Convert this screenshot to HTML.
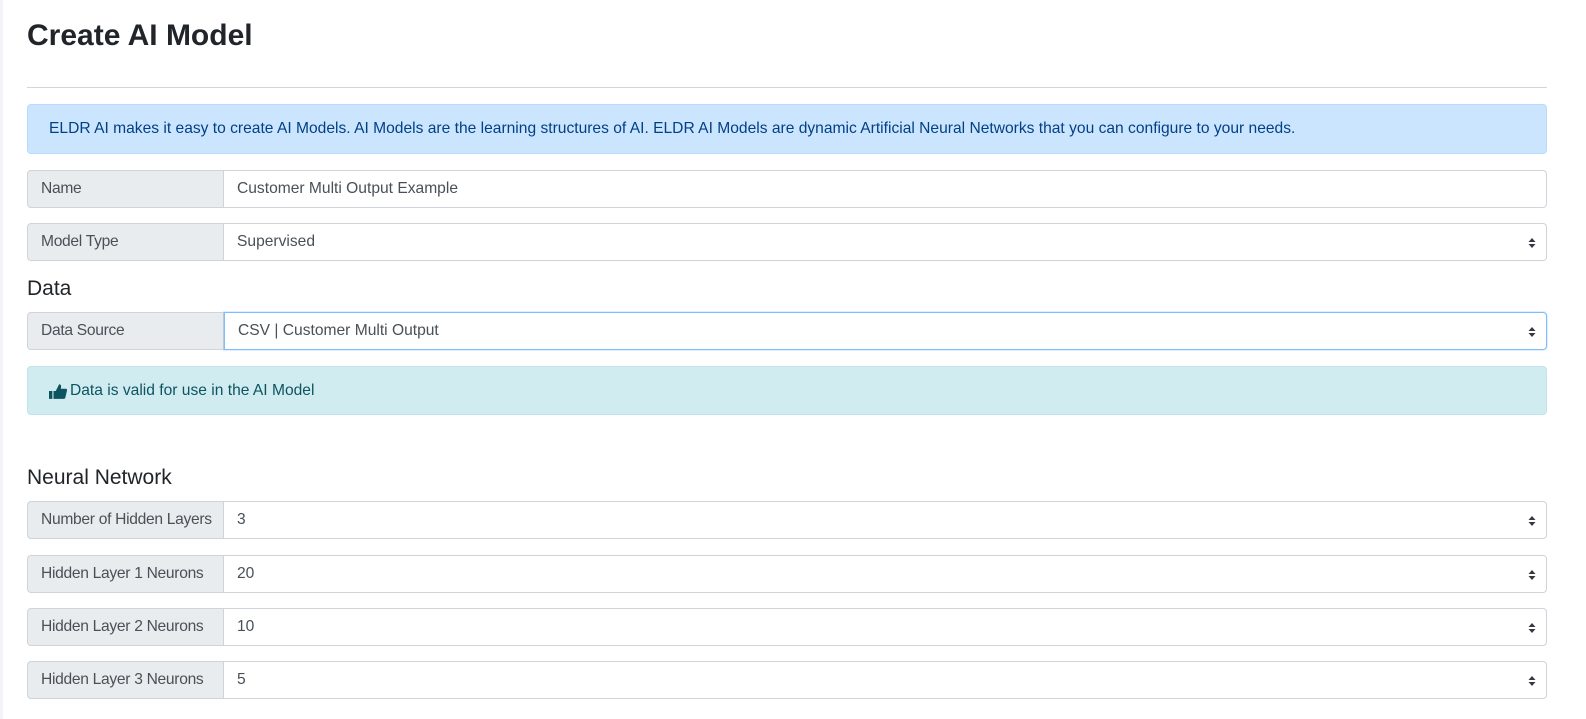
<!DOCTYPE html>
<html><head><meta charset="utf-8"><style>
*{box-sizing:border-box;margin:0;padding:0}
body{width:1586px;height:719px;background:#fff;font-family:"Liberation Sans",sans-serif;color:#212529;position:relative;overflow:hidden}
.strip{position:absolute;left:0;top:0;width:3px;height:719px;background:#f3f4f8}
h1{position:absolute;left:27px;top:19px;font-size:30px;font-weight:bold;color:#212529;letter-spacing:0px}
hr{position:absolute;left:27px;top:87px;width:1520px;border:0;border-top:1px solid #d5d5d5}
.alert{position:absolute;left:27px;width:1520px;border-radius:4px;font-size:15.6px;padding-left:21px;display:flex;align-items:center}
.info{top:104px;height:50px;background:#cce5ff;border:1px solid #b8daff;color:#004085}
.ok{top:366px;height:49px;background:#d1ecf1;border:1px solid #bee5eb;color:#0c5460}
.row{position:absolute;left:27px;width:1520px;height:38px;display:flex;font-size:15.6px}
.lab{width:197px;background:#e9ecef;border:1px solid #ced4da;border-radius:4px 0 0 4px;color:#495057;padding-left:13px;display:flex;align-items:center;white-space:nowrap;letter-spacing:-0.3px}
.inp{flex:1;border:1px solid #ced4da;border-left:0;border-radius:0 4px 4px 0;color:#495057;padding-left:13px;display:flex;align-items:center;position:relative;background:#fff}
.inp.focus{border:1px solid #80bdff;box-shadow:0 0 0 1px rgba(0,123,255,.12)}
.arr{position:absolute;right:10px;top:13px;width:8px;height:12px}
h3{position:absolute;left:27px;font-size:21px;font-weight:normal;color:#212529}
</style></head><body>
<div class="strip"></div>
<h1>Create AI Model</h1>
<hr>
<div class="alert info">ELDR AI makes it easy to create AI Models. AI Models are the learning structures of AI. ELDR AI Models are dynamic Artificial Neural Networks that you can configure to your needs.</div>
<div class="row" style="top:170px"><div class="lab">Name</div><div class="inp">Customer Multi Output Example</div></div>
<div class="row" style="top:223px"><div class="lab">Model Type</div><div class="inp">Supervised<svg class="arr" viewBox="0 0 8 12"><path d="M4 1L7.5 5H.5zM4 11L7.5 7H.5z" fill="#343a40"/></svg></div></div>
<h3 style="top:277px">Data</h3>
<div class="row" style="top:312px"><div class="lab">Data Source</div><div class="inp focus">CSV | Customer Multi Output<svg class="arr" viewBox="0 0 8 12"><path d="M4 1L7.5 5H.5zM4 11L7.5 7H.5z" fill="#343a40"/></svg></div></div>
<div class="alert ok"><svg width="18" height="16" viewBox="0 0 16 14" style="margin-right:3px"><rect x="0" y="7" width="3" height="7" fill="#0c5460"/><path d="M4 7h2l3-6c2 0 2 2 1.5 4H15c1 0 1 1 1 1.5L14.5 13c-.2.7-.7 1-1.3 1H4z" fill="#0c5460"/></svg>Data is valid for use in the AI Model</div>
<h3 style="top:466px">Neural Network</h3>
<div class="row" style="top:501px"><div class="lab">Number of Hidden Layers</div><div class="inp">3<svg class="arr" viewBox="0 0 8 12"><path d="M4 1L7.5 5H.5zM4 11L7.5 7H.5z" fill="#343a40"/></svg></div></div>
<div class="row" style="top:555px"><div class="lab">Hidden Layer 1 Neurons</div><div class="inp">20<svg class="arr" viewBox="0 0 8 12"><path d="M4 1L7.5 5H.5zM4 11L7.5 7H.5z" fill="#343a40"/></svg></div></div>
<div class="row" style="top:608px"><div class="lab">Hidden Layer 2 Neurons</div><div class="inp">10<svg class="arr" viewBox="0 0 8 12"><path d="M4 1L7.5 5H.5zM4 11L7.5 7H.5z" fill="#343a40"/></svg></div></div>
<div class="row" style="top:661px"><div class="lab">Hidden Layer 3 Neurons</div><div class="inp">5<svg class="arr" viewBox="0 0 8 12"><path d="M4 1L7.5 5H.5zM4 11L7.5 7H.5z" fill="#343a40"/></svg></div></div>
</body></html>
